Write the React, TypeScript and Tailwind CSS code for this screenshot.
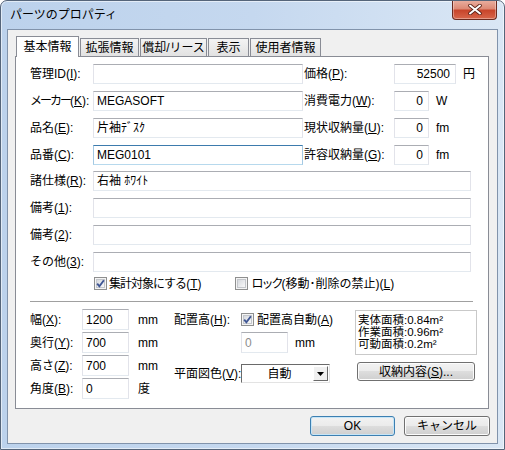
import React from 'react'

// --- ニーモニック付きラベル ---
const Mn: React.FC<{ t: React.ReactNode; k: string; colon?: boolean }> = ({ t, k, colon = true }) => (
  <>
    {t}(<span className="underline underline-offset-[1px]">{k}</span>){colon ? ':' : ''}
  </>
)

// --- Win7風テキストボックス ---
const Edit: React.FC<{
  w: string
  h?: string
  v?: string
  right?: boolean
  focus?: boolean
  disabled?: boolean
}> = ({ w, h = 'h-[20px]', v = '', right, focus, disabled }) => (
  <div
    className={`${w} ${h} shrink-0 flex items-center border bg-white ${
      focus
        ? 'border-t-[#3d7bad] border-x-[#a4c9e3] border-b-[#b7d9ed]'
        : 'border-t-[#abadb3] border-x-[#e2e3ea] border-b-[#e3e9ef]'
    } ${right ? 'justify-end pr-[5px]' : 'pl-[3px]'} ${disabled ? 'text-[#8d8d8d]' : 'text-black'}`}
  >
    {v}
  </div>
)

const Check: React.FC<{ checked?: boolean }> = ({ checked }) => (
  <span className="relative inline-block w-[13px] h-[13px] shrink-0 border border-[#8e8f8f] bg-[#f4f4f4]">
    <span className="absolute inset-[1px] border border-[#c3c6cb] bg-gradient-to-br from-[#d6d9de] to-[#f9f9f9]" />
    {checked && (
      <svg viewBox="0 0 11 11" className="absolute inset-0 w-[11px] h-[11px]">
        <path d="M2.2 5.6 L4.4 8.3 L8.9 2.3" fill="none" stroke="#3f5694" strokeWidth="1.9" />
      </svg>
    )}
  </span>
)

const Btn: React.FC<{ w: string; h: string; def?: boolean; children: React.ReactNode }> = ({ w, h, def, children }) => (
  <div
    className={`${w} ${h} flex items-center justify-center rounded-[3px] border ${
      def ? 'border-[#3c7fb1] shadow-[inset_0_0_0_1px_#c6e5f7]' : 'border-[#707070] shadow-[inset_0_0_0_1px_#fcfcfc]'
    } bg-[linear-gradient(#f2f2f2_0%,#ebebeb_49%,#dddddd_50%,#cfcfcf_100%)]`}
  >
    {children}
  </div>
)

const tabs = ['拡張情報', '償却/リース', '表示', '使用者情報']
const tabW = ['w-[59px]', 'w-[67px]', 'w-[41px]', 'w-[71px]']

const topRows = [
  { l: <Mn t="管理ID" k="I" />, v: '', r: <Mn t="価格" k="P" />, rv: '52500', rw: 'w-[62px]', u: '円' },
  {
    l: <Mn t={<span className="tracking-[-2px]">メーカー</span>} k="K" />,
    v: 'MEGASOFT',
    r: <Mn t="消費電力" k="W" />,
    rv: '0',
    rw: 'w-[35px]',
    u: 'W'
  },
  { l: <Mn t="品名" k="E" />, v: '片袖ﾃﾞｽｸ', r: <Mn t="現状収納量" k="U" />, rv: '0', rw: 'w-[35px]', u: 'fm' },
  { l: <Mn t="品番" k="C" />, v: 'MEG0101', r: <Mn t="許容収納量" k="G" />, rv: '0', rw: 'w-[35px]', u: 'fm', focus: true }
]

const wideRows = [
  { l: <Mn t="諸仕様" k="R" />, v: '右袖 ﾎﾜｲﾄ' },
  { l: <Mn t="備考" k="1" />, v: '' },
  { l: <Mn t="備考" k="2" />, v: '' },
  { l: <Mn t="その他" k="3" />, v: '' }
]

const sizeRows = [
  { l: <Mn t="幅" k="X" />, v: '1200', u: 'mm' },
  { l: <Mn t="奥行" k="Y" />, v: '700', u: 'mm' },
  { l: <Mn t="高さ" k="Z" />, v: '700', u: 'mm' },
  { l: <Mn t="角度" k="B" />, v: '0', u: '度' }
]

const App: React.FC = () => {
  return (
    <div className="w-[505px] h-[450px] relative overflow-hidden whitespace-nowrap rounded-t-[7px] border border-[#55657a] bg-gradient-to-r from-[#bcd2ec] via-[#c5d8ef] to-[#dae7f5] shadow-[inset_0_0_0_1px_rgba(255,255,255,0.55)] font-['Liberation_Sans','Noto_Sans_CJK_JP',sans-serif] text-[12px] leading-none text-black">
      {/* タイトルバー */}
      <div className="h-[28px] flex items-center pl-[9px] text-[12px]">パーツのプロパティ</div>
      <div className="absolute top-[-1px] right-[7px] w-[45px] h-[20px] rounded-b-[4px] border border-[#6b2a1f] border-t-0 bg-[linear-gradient(#eab1a2_0%,#dd8a76_45%,#c8452b_55%,#d8664b_100%)] shadow-[inset_0_0_0_1px_rgba(255,255,255,0.35)] flex items-center justify-center">
        <svg viewBox="0 0 14 11" className="w-[14px] h-[11px]">
          <path d="M2 1.5 L12 9.5 M12 1.5 L2 9.5" stroke="#5a2218" strokeWidth="3.6" strokeLinecap="round" />
          <path d="M2 1.5 L12 9.5 M12 1.5 L2 9.5" stroke="#ffffff" strokeWidth="2" strokeLinecap="round" />
        </svg>
      </div>

      {/* クライアント領域 */}
      <div className="mx-[6px] h-[415px] border border-[#8193ab] bg-[#f0f0f0]">
        {/* タブ */}
        <div className="flex items-end h-[26px] pl-[8px]">
          <div className="h-[21px] w-[63px] -mb-px relative z-10 border border-b-0 border-[#898c95] bg-white flex items-center justify-center pb-[1px]">
            基本情報
          </div>
          {tabs.map((t, i) => (
            <div
              key={t}
              className={`${tabW[i]} h-[18px] ml-[1px] border border-b-0 border-[#898c95] bg-gradient-to-b from-[#f3f3f3] to-[#e2e2e2] flex items-center justify-center`}
            >
              {t}
            </div>
          ))}
        </div>

        {/* タブページ */}
        <div className="ml-[7px] w-[474px] h-[353px] border border-[#898c95] bg-white pl-[14px] pt-[7px]">
          {topRows.map((r, i) => (
            <div key={i} className="flex items-center h-[20px] mb-[7px]">
              <span className="w-[63px] shrink-0">{r.l}</span>
              <Edit w="w-[210px]" v={r.v} focus={r.focus} />
              <span className="w-[90px] ml-[1px] shrink-0">{r.r}</span>
              <Edit w={r.rw} v={r.rv} right />
              <span className="ml-[7px]">{r.u}</span>
            </div>
          ))}
          {wideRows.map((r, i) => (
            <div key={i} className={`flex items-center h-[20px] ${i === 0 ? '-mt-[1px]' : ''} mb-[7px]`}>
              <span className="w-[63px] shrink-0">{r.l}</span>
              <Edit w="w-[378px]" v={r.v} />
            </div>
          ))}
          <div className="flex items-center h-[13px] -mt-[2px] pl-[64px]">
            <Check checked />
            <span className="ml-[2px]">
              <Mn t={<span className="tracking-[-1px]">集計対象にする</span>} k="T" colon={false} />
            </span>
            <span className="ml-[34px] flex items-center">
              <Check />
              <span className="ml-[3px]">
                <span className="tracking-[-2px]">ロック</span>(移動･削除の禁止)(
                <span className="underline underline-offset-[1px]">L</span>)
              </span>
            </span>
          </div>
          <div className="mt-[11px] w-[443px] h-px bg-[#a0a0a0]" />

          {/* サイズ等 */}
          <div className="flex mt-[7px]">
            <div className="w-[144px] flex flex-col gap-[2px]">
              {sizeRows.map((r, i) => (
                <div key={i} className="flex items-center h-[21px]">
                  <span className="w-[52px] shrink-0">{r.l}</span>
                  <Edit w="w-[47px]" h="h-[21px]" v={r.v} />
                  <span className="ml-[9px]">{r.u}</span>
                </div>
              ))}
            </div>
            <div className="w-[181px] flex flex-col">
              <div className="flex items-center h-[21px]">
                <span className="w-[67px] shrink-0">
                  <Mn t="配置高" k="H" />
                </span>
                <Check checked />
                <span className="ml-[3px]">
                  <Mn t="配置高自動" k="A" colon={false} />
                </span>
              </div>
              <div className="flex items-center h-[21px] mt-[2px] pl-[67px]">
                <Edit w="w-[47px]" h="h-[21px]" v="0" disabled />
                <span className="ml-[7px]">mm</span>
              </div>
              <div className="flex items-center h-[19px] mt-[11px]">
                <span className="w-[67px] shrink-0">
                  <Mn t="平面図色" k="V" />
                </span>
                <div className="w-[89px] h-[19px] flex items-center border border-t-[#6a6a6a] border-l-[#6a6a6a] border-b-[#e3e3e3] border-r-[#e3e3e3] bg-white">
                  <span className="flex-1 text-center pl-[4px]">自動</span>
                  <span className="w-[15px] h-[15px] mr-[1px] flex items-center justify-center bg-[#f0f0f0] border border-t-white border-l-white border-b-[#6a6a6a] border-r-[#6a6a6a]">
                    <svg viewBox="0 0 7 4" className="w-[7px] h-[4px]">
                      <path d="M0 0 L7 0 L3.5 4 Z" fill="#000" />
                    </svg>
                  </span>
                </div>
              </div>
            </div>
            <div className="flex flex-col pt-[1px]">
              <div className="w-[122px] h-[45px] border border-[#c9c9c9] bg-white pl-[2px] pt-[3px] leading-[12px] text-[11.5px]">
                <div>実体面積:0.84m²</div>
                <div>作業面積:0.96m²</div>
                <div>可動面積:0.2m²</div>
              </div>
              <div className="mt-[7px] ml-[2px]">
                <Btn w="w-[118px]" h="h-[19px]">
                  <Mn t="収納内容" k="S" colon={false} />
                  ...
                </Btn>
              </div>
            </div>
          </div>
        </div>

        {/* OK / キャンセル */}
        <div className="flex justify-end gap-[9px] mt-[7px] pr-[7px]">
          <Btn w="w-[85px]" h="h-[20px]" def>
            OK
          </Btn>
          <Btn w="w-[86px]" h="h-[20px]">
            キャンセル
          </Btn>
        </div>
      </div>
    </div>
  )
}

export default App
